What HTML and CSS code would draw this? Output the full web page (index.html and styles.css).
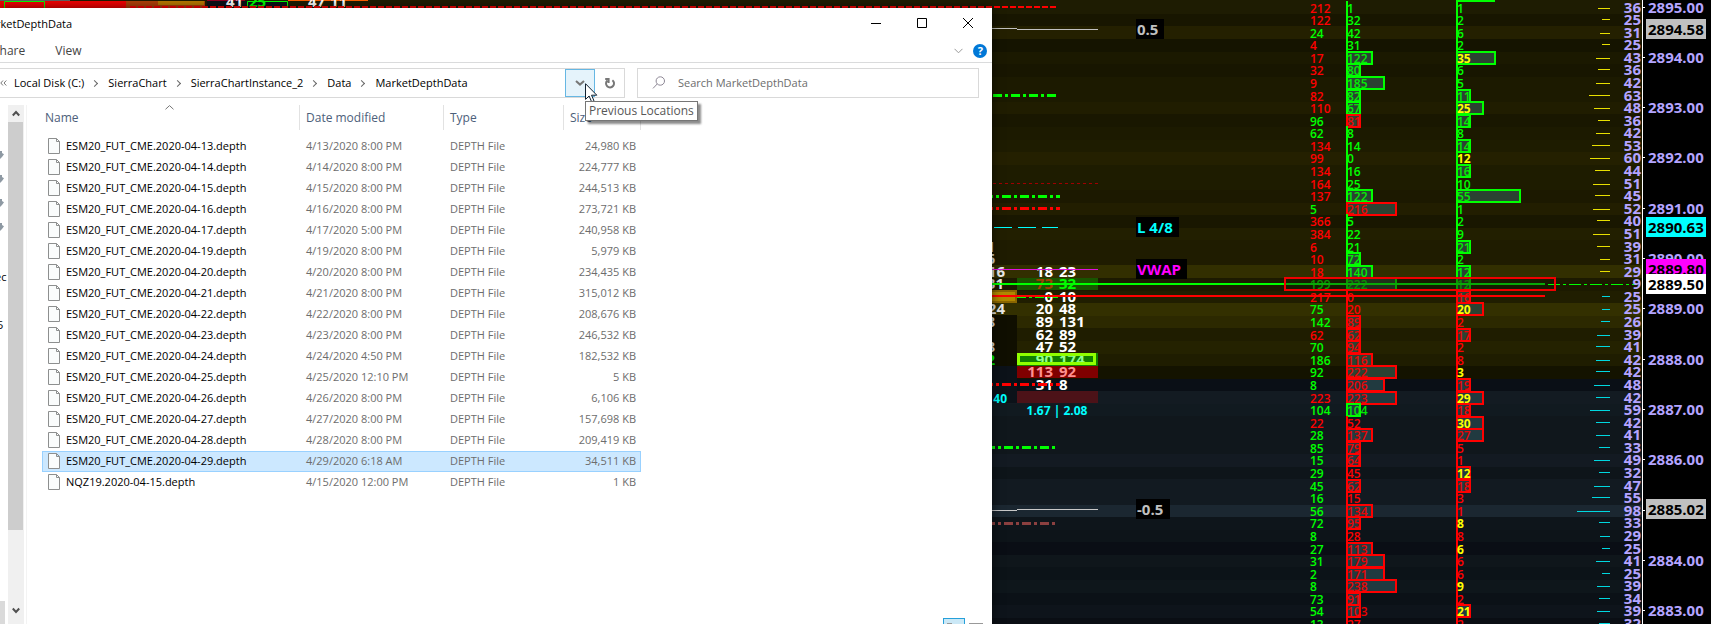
FILE: index.html
```html
<!DOCTYPE html>
<html lang="en">
<head>
<meta charset="utf-8">
<title>MarketDepthData</title>
<link rel="stylesheet" href="styles.css">
</head>
<body>
<main class="desktop">
  <svg class="chart" id="chart" role="img" aria-label="Market depth chart"></svg>

  <section class="explorer" aria-label="MarketDepthData">
    <header class="titlebar">
      <h1 class="title">MarketDepthData</h1>
      <div class="window-buttons">
        <button type="button" aria-label="Minimize"><svg width="10" height="10"><path d="M0 5.5H10"/></svg></button>
        <button type="button" aria-label="Maximize"><svg width="10" height="10"><path d="M.5.5H9.5V9.5H.5Z"/></svg></button>
        <button type="button" aria-label="Close"><svg width="10" height="10"><path d="M0 0L10 10M10 0L0 10"/></svg></button>
      </div>
    </header>
    <nav class="ribbon" aria-label="Ribbon">
      <a href="#share">Share</a>
      <a href="#view">View</a>
      <span class="ribbon-end">
        <button type="button" aria-label="Expand the ribbon"><svg width="9" height="6"><path d="M.5.8L4.5 4.8L8.5.8"/></svg></button>
        <button type="button" class="help" aria-label="Help">?</button>
      </span>
    </nav>
    <div class="bars">
      <div class="address">
        <span class="more" aria-hidden="true"><svg width="7" height="6"><path d="M3 .5L.8 3L3 5.5M6.3.5L4 3L6.3 5.5"/></svg></span>
        <a href="#c">Local Disk (C:)</a><i class="chev"></i>
        <a href="#sc">SierraChart</a><i class="chev"></i>
        <a href="#sci">SierraChartInstance_2</a><i class="chev"></i>
        <a href="#data">Data</a><i class="chev"></i>
        <a href="#mdd">MarketDepthData</a>
        <button type="button" class="previous" aria-label="Previous Locations"><svg width="10" height="6"><path d="M1 1L5 4.6L9 1"/></svg></button>
        <button type="button" class="refresh" aria-label="Refresh"><svg width="12" height="13"><path d="M8.4 3.2A4 4 0 1 1 3.4 3.4M1.2 2H4.6V6"/></svg></button>
        <svg class="cursor" width="13" height="20" viewBox="0 0 13 20" aria-hidden="true"><path d="M.5.7V16.4L4.1 13L6.6 18.8L9 17.8L6.5 12.2H11.8Z"/></svg>
        <span class="tooltip" role="tooltip">Previous Locations</span>
      </div>
      <label class="search">
        <svg width="14" height="14" aria-hidden="true"><circle cx="8.3" cy="5" r="4.2"/><path d="M5.2 8L1 12.4"/></svg>
        <input type="text" placeholder="Search MarketDepthData" aria-label="Search MarketDepthData">
      </label>
    </div>
    <div class="content">
      <aside class="tree" aria-label="Navigation pane">
        <ul class="pins">
          <li></li><li></li><li></li><li></li>
        </ul>
        <p>ec</p>
        <p>5</p>
        <div class="tree-scroll"></div>
      </aside>
      <div class="scrollbar">
        <button type="button" aria-label="Scroll up"><svg width="8" height="7"><path d="M.8 5.5L4 2L7.2 5.5"/></svg></button>
        <div class="thumb"></div>
        <button type="button" class="down" aria-label="Scroll down"><svg width="8" height="7"><path d="M.8 1.5L4 5L7.2 1.5"/></svg></button>
      </div>
      <div class="files">
        <table>
          <thead>
            <tr>
              <th class="name" scope="col">Name<svg class="sort" width="9" height="5"><path d="M.5 4.3L4.5.6L8.5 4.3"/></svg></th>
              <th class="date" scope="col">Date modified</th>
              <th class="type" scope="col">Type</th>
              <th class="size" scope="col">Size</th>
            </tr>
          </thead>
          <tbody id="rows"></tbody>
        </table>
      </div>
      <div class="view-modes">
        <button type="button" class="on" aria-label="Details"></button>
        <button type="button" aria-label="Large icons"></button>
      </div>
    </div>
  </section>
</main>
<script src="app.js"></script>
</body>
</html>
```
FILE: styles.css
```css
* { box-sizing: border-box; }

body {
  margin: 0;
  background: #000;
  color: #000;
  font: 11px/16px "Open Sans", "Noto Sans", sans-serif;
}

button {
  display: grid;
  place-items: center;
  margin: 0;
  padding: 0;
  border: 0;
  background: none;
  color: inherit;
  font: inherit;
}

a { color: inherit; text-decoration: none; }
.explorer svg { fill: none; stroke: currentColor; }

.desktop {
  position: relative;
  display: flex;
  min-height: 100vh;
  padding-top: 8px;
  overflow: hidden;
}

/* Chart */
.chart {
  position: absolute;
  inset: 0;
  width: 100%;
  height: 100%;
  font-family: "Open Sans", "Noto Sans", sans-serif;
  font-weight: 600;
}
.chart .small { font-size: 12px; }
.chart .large { font-size: 15px; font-weight: 700; }
.chart .bold { font-weight: 700; }

/* Explorer window */
.explorer {
  position: relative;
  display: flex;
  flex-direction: column;
  width: 58%;
  background: #fff;
  box-shadow: 0 0 10px rgba(0, 0, 0, .6);
}

.titlebar { display: flex; height: 30px; padding-right: 1px; }
.title {
  flex: 1;
  margin: 8px 0 0 -20px;
  font: inherit;
}
.window-buttons { display: flex; }
.window-buttons button { width: 46px; height: 30px; }

.ribbon {
  display: flex;
  align-items: center;
  height: 25px;
  gap: 30px;
  margin-left: -7px;
  padding-top: 2px;
  border-bottom: 1px solid #dadbdc;
  color: #444;
  font-size: 12px;
}
.ribbon-end {
  display: flex;
  align-items: center;
  gap: 10px;
  margin-left: auto;
  padding-right: 5px;
  color: #999;
}
.help {
  width: 14px;
  height: 14px;
  border-radius: 50%;
  background: #0078d7;
  color: #fff;
  font-weight: 700;
  font-size: 11px;
  line-height: 14px;
}

.bars {
  display: flex;
  gap: 12px;
  padding: 5px 13px 7px 0;
}
.address {
  position: relative;
  display: flex;
  align-items: center;
  width: 625px;
  height: 30px;
  border: 1px solid #d9d9d9;
  border-left: 0;
}
.more { display: flex; width: 14px; color: #777; }
.chev {
  width: 5px;
  height: 5px;
  margin: 0 11px 0 8px;
  border: solid #666;
  border-width: 1px 1px 0 0;
  transform: rotate(45deg);
}
.previous {
  width: 30px;
  height: 28px;
  margin-left: auto;
  border: 1px solid #66b7e3;
  background: #e5f3fb;
  color: #777;
  stroke-width: 2;
}
.refresh { width: 29px; height: 28px; color: #777; stroke-width: 2; }
.cursor {
  position: absolute;
  left: 585px;
  top: 14px;
  z-index: 2;
}
.explorer .cursor { fill: #fff; stroke: #102030; }
.tooltip {
  position: absolute;
  left: 585px;
  top: 32px;
  z-index: 3;
  padding: 0 3px;
  border: 1px solid #767676;
  background: #fff;
  box-shadow: 3px 3px 2px rgba(0, 0, 0, .45);
  color: #575757;
  font-size: 12px;
  line-height: 18px;
  white-space: nowrap;
}
.search {
  display: flex;
  flex: 1;
  align-items: center;
  gap: 12px;
  padding-left: 14px;
  border: 1px solid #d9d9d9;
  color: #8d8795;
}
.search input {
  flex: 1;
  min-width: 0;
  padding: 0;
  border: 0;
  outline: 0;
  font: inherit;
}
.search input::placeholder { color: #6d6d6d; opacity: 1; }

.content { position: relative; display: flex; flex: 1; }

.tree {
  display: flex;
  flex-direction: column;
  width: 8px;
  overflow: hidden;
}
.pins { margin: 46px 0 0; padding: 0; list-style: none; }
.pins li {
  width: 4px;
  height: 8px;
  margin-bottom: 16px;
  background: #8e99a3;
  clip-path: polygon(0 0, 50% 0, 50% 25%, 100% 40%, 50% 75%, 0 100%);
}
.tree p { margin: 22px 0 16px -5px; }
.tree p + p { margin: 16px 0 0 -3px; }
.tree-scroll { width: 5px; height: 23px; margin-top: auto; background: #dadada; }

.scrollbar {
  display: flex;
  flex-direction: column;
  width: 19px;
  border-right: 1px solid #f3f3f3;
  background: linear-gradient(90deg, #f0f0f0 16px, #fff 16px);
  color: #505050;
  stroke-width: 2;
}
.scrollbar button { width: 15px; height: 17px; }
.scrollbar .down { height: 28px; margin-top: auto; }
.thumb { width: 15px; height: 408px; background: #cdcdcd; }

.files { padding-left: 15px; }
table {
  width: 599px;
  border-collapse: separate;
  border-spacing: 0;
  table-layout: fixed;
}
th {
  position: relative;
  height: 25px;
  padding: 0 0 0 6px;
  border-right: 1px solid #e2e2e2;
  color: #4c607a;
  font-size: 12px;
  font-weight: 400;
  text-align: left;
}
.name { width: 258px; padding-left: 3px; }
.date { width: 144px; }
.type { width: 120px; }
.sort { position: absolute; left: 123px; top: 0; color: #777; }
tbody::before { display: block; height: 6px; content: ""; }
td {
  height: 21px;
  padding: 0 0 1px 6px;
  border: solid transparent;
  border-width: 1px 0;
  color: #6d6d6d;
  line-height: 18px;
  white-space: nowrap;
}
td:first-child { display: flex; align-items: center; gap: 6px; border-left-width: 1px; padding-left: 5px; color: #000; }
td:last-child { padding-right: 4px; border-right-width: 1px; text-align: right; }
.selected td { border-color: #99d1ff; background: #cce8ff; }
.explorer .page { flex: none; fill: #fafcfc; stroke: #8d8f8f; }

.view-modes {
  position: absolute;
  right: 9px;
  bottom: 0;
  display: flex;
  align-items: flex-end;
  gap: 4px;
}
.view-modes button { width: 14px; height: 1px; background: #999; }
.view-modes .on {
  width: 22px;
  height: 6px;
  border: 1px solid #26a0da;
  border-bottom: 0;
  background: linear-gradient(#999, #999) 3px 4px / 5px 1px no-repeat #cbe8f6;
}
```
FILE: app.js
```javascript
const files = [
  ["ESM20_FUT_CME.2020-04-13.depth", "4/13/2020 8:00 PM", "24,980 KB"],
  ["ESM20_FUT_CME.2020-04-14.depth", "4/14/2020 8:00 PM", "224,777 KB"],
  ["ESM20_FUT_CME.2020-04-15.depth", "4/15/2020 8:00 PM", "244,513 KB"],
  ["ESM20_FUT_CME.2020-04-16.depth", "4/16/2020 8:00 PM", "273,721 KB"],
  ["ESM20_FUT_CME.2020-04-17.depth", "4/17/2020 5:00 PM", "240,958 KB"],
  ["ESM20_FUT_CME.2020-04-19.depth", "4/19/2020 8:00 PM", "5,979 KB"],
  ["ESM20_FUT_CME.2020-04-20.depth", "4/20/2020 8:00 PM", "234,435 KB"],
  ["ESM20_FUT_CME.2020-04-21.depth", "4/21/2020 8:00 PM", "315,012 KB"],
  ["ESM20_FUT_CME.2020-04-22.depth", "4/22/2020 8:00 PM", "208,676 KB"],
  ["ESM20_FUT_CME.2020-04-23.depth", "4/23/2020 8:00 PM", "246,532 KB"],
  ["ESM20_FUT_CME.2020-04-24.depth", "4/24/2020 4:50 PM", "182,532 KB"],
  ["ESM20_FUT_CME.2020-04-25.depth", "4/25/2020 12:10 PM", "5 KB"],
  ["ESM20_FUT_CME.2020-04-26.depth", "4/26/2020 8:00 PM", "6,106 KB"],
  ["ESM20_FUT_CME.2020-04-27.depth", "4/27/2020 8:00 PM", "157,698 KB"],
  ["ESM20_FUT_CME.2020-04-28.depth", "4/28/2020 8:00 PM", "209,419 KB"],
  ["ESM20_FUT_CME.2020-04-29.depth", "4/29/2020 6:18 AM", "34,511 KB"],
  ["NQZ19.2020-04-15.depth", "4/15/2020 12:00 PM", "1 KB"]
];
const page = '<svg class="page" width="12" height="16"><path d="M.5.5H8.5L11.5 3.5V15.5H.5ZM8.5.5V3.5H11.5"/></svg>';
document.getElementById("rows").innerHTML = files.map((f, i) =>
  `<tr${i === 15 ? ' class="selected"' : ""}><td>${page}${f[0]}</td><td>${f[1]}</td><td>DEPTH File</td><td>${f[2]}</td></tr>`
).join("");

const GREEN = "#00ff00", RED = "#ff0000", YELLOW = "#ffff00", CYAN = "#00ffff";
const FIRST = 7.5, STEP = 12.583;
const rowY = i => Math.round(FIRST + STEP * i);

// Columns: pulled orders, bid/ask size, its box width, trades, its box width, volume.
const ladder = `
r212 g1 0 g1 0 36
r122 g32 0 g2 0 25
g24 g42 0 g6 0 31
r4 g31 0 g2 0 25
r17 g122 26 y35 39 43
r32 g80 14 g6 0 36
r9 g185 38 g5 0 42
r82 g82 14 g11 14 63
r110 g67 14 y25 27 48
g96 r81 14 g14 14 36
g62 g8 0 g8 0 42
r134 g14 0 g14 14 53
r99 g0 0 y12 0 60
r134 g16 0 g16 14 44
r164 g25 0 g10 0 51
r137 g122 26 g55 64 45
g5 r216 50 g1 0 52
r366 g5 0 g2 0 40
r384 g22 0 g9 0 51
r6 g21 0 g21 14 39
r10 g72 14 g2 0 31
r18 g140 26 g12 14 29
g199 g222 50 g12 14 9
r217 r0 0 r16 14 25
g75 r20 0 y20 27 25
g142 r89 14 r2 0 26
r62 r62 14 r17 14 39
g70 r94 14 r2 0 41
g186 r116 26 r8 0 42
g92 r222 50 y3 0 42
g8 r206 38 r19 14 48
r223 r223 50 y29 27 42
g104 g104 14 r18 14 59
r22 r52 0 y30 27 42
g28 r137 26 r27 27 41
g85 r79 14 r5 0 33
g15 r64 14 r1 0 49
g29 r45 0 y12 14 32
g45 r62 14 r18 14 47
g16 r15 0 r3 0 55
g56 r134 26 r1 0 98
g72 r95 14 y8 0 33
g8 r28 0 r8 0 29
g27 r113 26 y6 0 25
g31 r179 38 r6 0 41
g2 r171 38 r6 0 25
g8 r238 50 y9 0 39
g73 r91 14 r2 0 34
g54 r103 14 y21 14 39
g13 r27 0 r2 0 32`.trim().split("\n").map(l => l.split(" "));

const shades = ("1e1c02 181600 242000 151400 1b1900 181600 1c1a00 1c1a00 201d00 191700 1c1a00 1e1c00 242000 1e1c00 1e1c00 " +
  "1c1900 221e00 191700 221f00 1f1c00 1f1c00 322f00 1c1a00 201e00 333000 2c2900 1f1d00 242200 1f1d00 141300 0a0f16 131b22 " +
  "111a20 10171c 10171c 10171c 131a22 0e151a 121a21 121a21 1b2731 0e151b 0d1419 0a0e15 0f161b 0c1318 0e161b 0b1117 0e141b 0a0e14").split(" ");

const colour = { r: RED, g: GREEN, y: YELLOW };
const rect = (x, y, w, h, fill, extra = "") => `<rect x="${x}" y="${y}" width="${w}" height="${h}" fill="${fill}" ${extra}/>`;
const line = (x1, x2, y, c, w = 1, dash = "") => `<path d="M${x1} ${y}H${x2}" stroke="${c}" stroke-width="${w}" ${dash && `stroke-dasharray="${dash}"`}/>`;
const text = (x, y, s, c, cls, extra = "") => `<text x="${x}" y="${y}" fill="${c}" class="${cls}" ${extra}>${s}</text>`;
const END = 'text-anchor="end"';

let back = "", left = "", right = "";

shades.forEach((s, i) => {
  const top = Math.round(1.2 + STEP * i), next = Math.round(1.2 + STEP * (i + 1));
  back += rect(0, i ? top : 0, "100%", i ? next - top : next, "#" + s);
});

// Strip of chart above the window
left += rect(0, 0, 70, 2, "#606060") + rect(0, 1, 126, 7, "#f00000") + rect(126, 1, 79, 7, "#b04008") + rect(158, 1, 46, 4, "#b87800")
  + rect(207, 1, 80, 7, "#0c1018") + rect(207, 0, 38, 1, "#900020") + rect(288, 0, 80, 1, "#ff6000")
  + `<path d="M4.5 8V1.5H44.5V8M247.5 8V1.5H287.5V8" fill="none" stroke="${GREEN}"/>`
  + text(226, 7, "41", "#fff", "large") + text(249, 7, "25", GREEN, "large")
  + text(308, 7, "47", "#fff", "large") + text(330, 7, "11", "#fff", "large")
  + line(130, 1058, 7, RED, 2, "6 2");

// Study lines
const dots = "9 3 3 3";
left += line(980, 1017, 28.5, "#c0c0c0") + line(1017, 1098, 29.5, "#c0c0c0")
  + line(993, 1057, 95.5, GREEN, 3, dots) + line(993, 1098, 183.5, "#a00000", 1, "3 3")
  + line(984, 1060, 196.5, GREEN, 3, dots) + line(984, 1060, 208.5, RED, 3, dots)
  + line(994, 1058, 227.5, CYAN, 1, "18 6")
  + line(986, 1056, 447.5, GREEN, 3, dots) + line(986, 1056, 523.5, "#8b4040", 3, dots)
  + line(980, 1017, 510.5, "#c8c8c8") + line(1017, 1098, 509.5, "#c8c8c8");

// Footprint bars
left += rect(980, 315, 37, 51, "#100f00") + rect(980, 366, 37, 37, "#0c1219")
  + rect(1017, 278, 81, 12, "#195500") + rect(1017, 353, 81, 13, "#108000")
  + rect(1017, 366, 81, 12, "#800000") + rect(1017, 391, 81, 12, "#4c1218")
  + rect(980, 291, 36, 11, "#b08800", 'stroke="#8a6600" stroke-width="2"');
[["18", 23], ["73", 32, "#a04000", GREEN], ["0", 10], ["20", 48], ["89", 131], ["62", 89], ["47", 52],
 ["90", 174, "#90ff90", "#90ff90"], ["113", 92, "#ff9090", "#ff9090"], ["31", 8]].forEach(([a, b, ca = "#fff", cb = ca], k) => {
  const y = rowY(21 + k) + 5;
  left += text(1053, y, a, ca, "large", END) + text(1059, y, b, cb, "large");
});
[[19, "1", 995], [20, "6", 995], [21, "16", 1005], [22, "31", 1004], [24, "24", 1005], [25, "8", 995], [27, "8", 995], [28, "2", 995]].forEach(([i, s, x]) => {
  left += text(x, rowY(i) + 5, s, i === 28 ? GREEN : "#e8e8e8", "large", END);
});
left += rect(1018.5, 354.5, 76, 9, "none", 'stroke="#90ff00" stroke-width="3"')
  + text(1007, 403, "40", CYAN, "small bold", END) + text(1057, 415, "1.67 | 2.08", CYAN, "small bold", 'text-anchor="middle"')
  + line(980, 1098, 269.5, "#e010e0") + line(1017, 1058, 297.5, GREEN, 1, dots)
  + line(984, 1060, 384.5, RED, 3, dots);

// Level labels
[["0.5", 19, 28, "#c0c0c0"], ["L 4/8", 217, 43, CYAN], ["VWAP", 259, 51, "#ff00ff"], ["-0.5", 499, 34, "#c0c0c0"]].forEach(([s, y, w, c]) => {
  left += rect(1136, y, w, 20, "#000") + text(1137, y + 16, s, c, "large");
});

// Bid and ask columns
const columns = (x, n, w) => {
  let out = "";
  ladder.forEach((r, i) => {
    const y = rowY(i), bw = +r[w], k = r[n][0];
    const c = k === "y" ? (i > 22 ? RED : GREEN) : colour[k];
    out += rect(x, y - 7, 2, 14, i > 22 ? RED : GREEN);
    if (bw) out += rect(x + 1, y - 6, bw - 1, 12, i < 30 ? "#2b4232" : "#213a40", `stroke="${c}" stroke-width="2"`);
  });
  ladder.forEach((r, i) => {
    const boxed = +r[w] && r[n][0] !== "y";
    out += text(x + 1, rowY(i) + 5, r[n].slice(1), colour[r[n][0]], "small" + (r[n][0] === "y" ? " bold" : ""), boxed ? 'opacity=".9"' : "");
  });
  return out;
};
right += rect(1457, -8, 37, 9, "#2b4232", `stroke="${GREEN}" stroke-width="2"`)
  + columns(1346, 1, 2) + columns(1456, 3, 4);

ladder.forEach((r, i) => {
  const y = rowY(i);
  right += text(1310, y + 5, r[0].slice(1), colour[r[0][0]], "small");
  if (i !== 22) right += line(1610 - Math.round(r[5] / 3), 1610, y + .5 - (i % 2 ? 1 : 0), i < 22 ? "#e8e000" : "#00d8e0");
});

// Last trade and current bid/ask
right += rect(1286, 279, 268, 11, "#141c00", 'opacity=".45"')
  + line(980, 1285, 284, GREEN, 2) + line(1285, 1545, 284, "#08a808", 2)
  + line(980, 1545, 296, RED, 2) + line(1548, 1636, 284.5, GREEN, 1, "12 3 3 3")
  + rect(1285, 278, 270, 12, "none", 'stroke="#f00000" stroke-width="2"');

// Price axis
right += rect(1643, 0, 68, "100%", "#000") + rect(1642, 0, 1, "100%", "#fff");
ladder.forEach((r, i) => {
  right += text(1641, rowY(i) + 5, r[5], "#b4a4ff", "large", END);
  if (i % 4 === 0) right += rect(1643, rowY(i) - 1, 2, 1, "#fff") + text(1648, rowY(i) + 5, (2895 - i / 4).toFixed(2), "#b4a4ff", "large");
});
[["2894.58", 19, "#c0c0c0"], ["2890.63", 217, CYAN], ["2889.80", 259, "#ff00ff"], ["2889.50", 274, "#fff"], ["2885.02", 499, "#c0c0c0"]].forEach(([s, y, c]) => {
  right += rect(1646, y, 60, 20, c) + text(1648, y + 16, s, "#000", "large");
});

// The price ladder stays attached to the right edge of the window.
document.getElementById("chart").innerHTML =
  back + left + `<svg x="100%" height="100%" overflow="visible"><g transform="translate(-1711)">${right}</g></svg>`;
```
